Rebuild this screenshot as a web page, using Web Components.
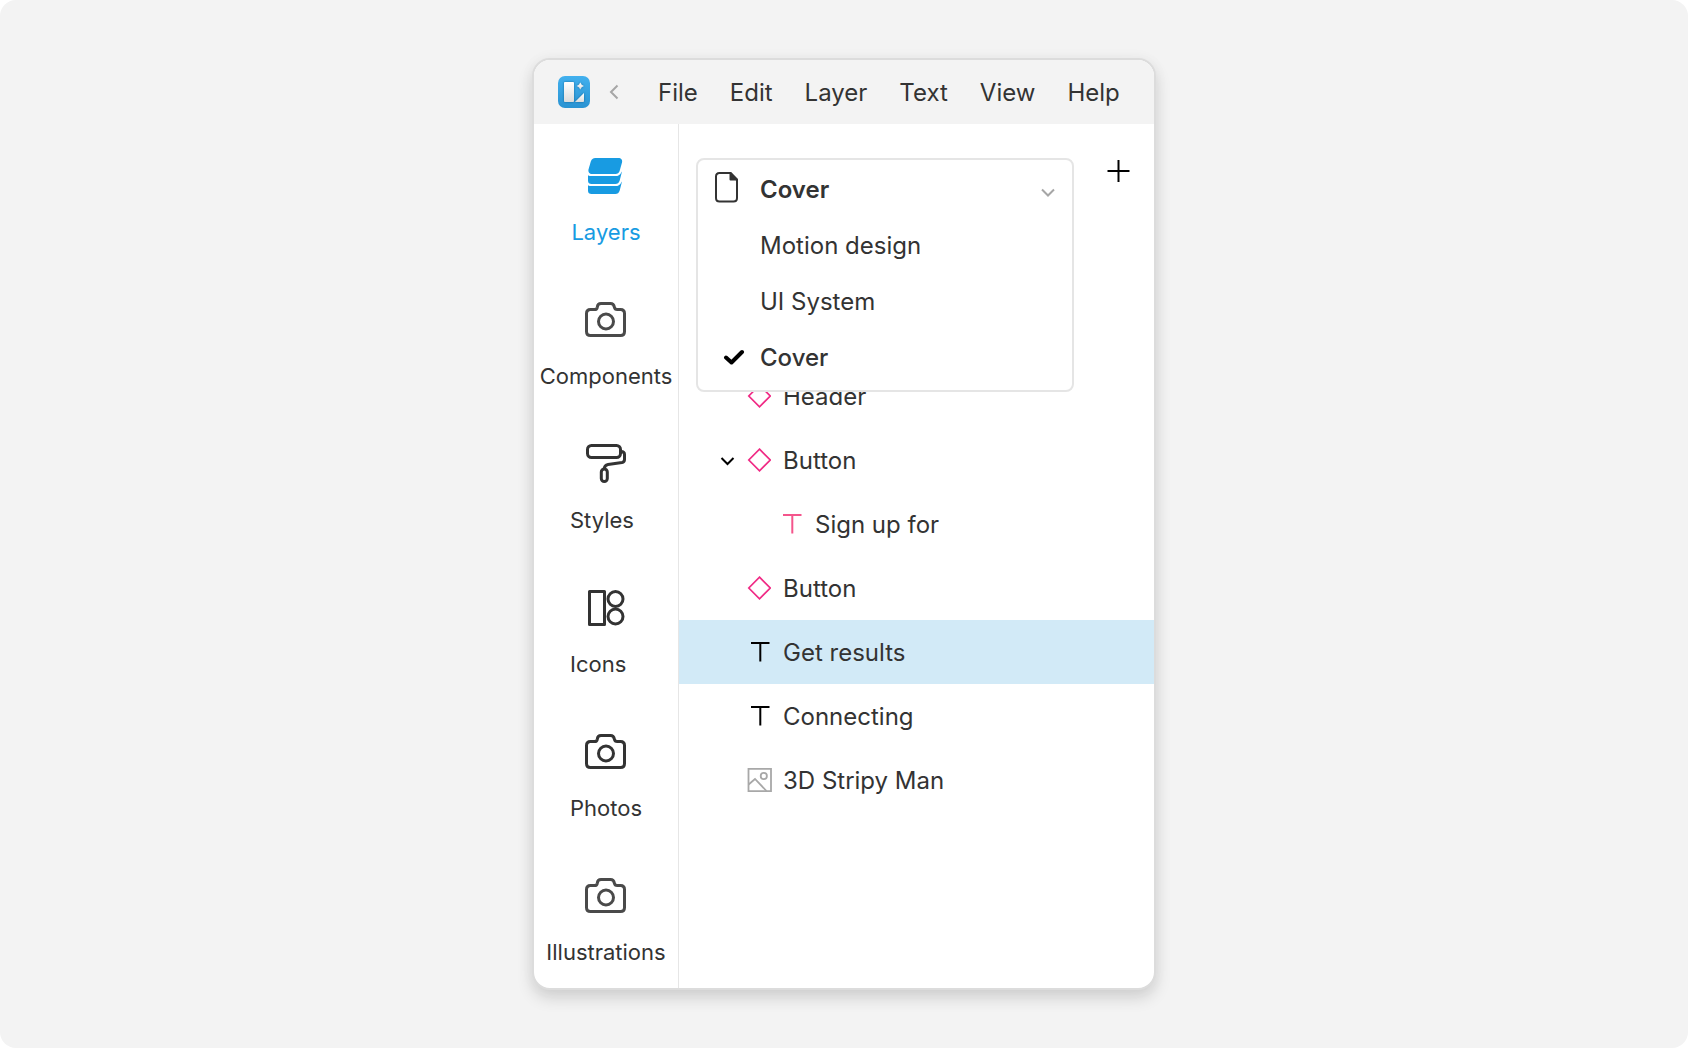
<!DOCTYPE html>
<html lang="en">
<head>
<meta charset="utf-8">
<title>Editor layers panel</title>
<style>
  html { background: #fff; }
  body { margin: 0; font-family: Inter, "Liberation Sans", sans-serif; font-weight: 400; color: #333; }
</style>
</head>
<body>
<editor-stage>
  <editor-window>
    <menu-bar slot="menu">
      <a href="#file">File</a><a href="#edit">Edit</a><a href="#layer">Layer</a><a href="#text">Text</a><a href="#view">View</a><a href="#help">Help</a>
    </menu-bar>
    <side-nav slot="side">
      <side-item icon="layers" active>Layers</side-item>
      <side-item icon="camera" soft>Components</side-item>
      <side-item icon="roller">Styles</side-item>
      <side-item icon="shapes">Icons</side-item>
      <side-item icon="camera">Photos</side-item>
      <side-item icon="camera" soft>Illustrations</side-item>
    </side-nav>
    <page-toolbar>
      <page-picker current="Cover">
        <page-option>Motion design</page-option>
        <page-option>UI System</page-option>
        <page-option checked>Cover</page-option>
      </page-picker>
    </page-toolbar>
    <layer-tree>
      <layer-row icon="diamond">Header</layer-row>
      <layer-row icon="diamond" expanded>Button</layer-row>
      <layer-row icon="text" tone="pink" nested>Sign up for</layer-row>
      <layer-row icon="diamond">Button</layer-row>
      <layer-row icon="text" selected>Get results</layer-row>
      <layer-row icon="text">Connecting</layer-row>
      <layer-row icon="image">3D Stripy Man</layer-row>
    </layer-tree>
  </editor-window>
</editor-stage>

<script>
const RESET = `
  *, *::before, *::after { box-sizing: border-box; }
  button { font: inherit; color: inherit; background: none; border: 0; margin: 0; padding: 0; text-align: left; cursor: pointer; }
  svg { display: block; flex: none; }
`;

const ICONS = {
  layers: `<svg width="40" height="40" viewBox="0 0 40 40" fill="currentColor">
    <path d="M9.400 2H32.500C35 2 36.700 4 36 6.500L33.600 15C33 17 31.500 18 29.500 18H6C3.500 18 1.900 16 2.500 13.500L4.800 5.500C5.500 3.200 7 2 9.400 2Z"/>
    <path d="M2 19.200C3.200 19.900 4.500 20.100 6 20.100H29.500C32 20.100 34.300 18.800 35.400 16.200L36 15.500L33.700 24.500C33 26.900 31.500 28 29.300 28H5.500C3.400 28 2 26.800 2 24.700Z"/>
    <path d="M2 29.200C3.200 29.900 4.500 30.100 6 30.100H29.500C32 30.100 34.300 28.800 35.400 26.200L36 25.500L33.700 34.500C33 36.900 31.500 38 29.300 38H5.500C3.400 38 2 36.800 2 34.700Z"/></svg>`,
  camera: `<svg width="42" height="40" viewBox="0 0 42 40" fill="none" stroke="currentColor" stroke-width="3" stroke-linejoin="round">
    <path d="M5.500 9.500H9.500C11.500 9.500 12.100 8.700 12.300 7.200C12.500 5 13.800 3.500 16 3.500H25.500C27.700 3.500 29 5 29.400 7.200C29.700 8.700 30.400 9.500 32.200 9.500H35.500C38 9.500 39.500 11 39.500 13.500V31.500C39.500 34 38 35.500 35.500 35.500H5.500C3 35.500 1.500 34 1.500 31.500V13.500C1.500 11 3 9.500 5.500 9.500Z"/>
    <circle cx="21" cy="21.500" r="7.500"/></svg>`,
  roller: `<svg width="40" height="40" viewBox="0 0 40 40" fill="none" stroke="currentColor" stroke-width="3" stroke-linejoin="round">
    <rect x="1.500" y="1.500" width="33" height="12" rx="4"/>
    <path d="M35 7.500C37.200 7.500 38.500 8.500 38.500 10.500V15.500C38.500 17.400 37.800 18.200 36 18.500L22 20.500C19.500 20.900 18.300 22.500 18.300 25"/>
    <rect x="15.300" y="25" width="6" height="12.500" rx="3"/></svg>`,
  shapes: `<svg width="40" height="40" viewBox="0 0 40 40" fill="none" stroke="currentColor" stroke-width="3">
    <path d="M3.500 3.500H18.500V36.500H3.500Z" stroke-linejoin="round"/>
    <circle cx="29.500" cy="11" r="7.500"/><circle cx="29.500" cy="28.500" r="7.500"/></svg>`,
  diamond: `<svg width="24" height="24" viewBox="0 0 24 24" fill="none" stroke="#f02a85" stroke-width="1.700"><path d="M12.500 1.200L23.200 12L12.500 22.800L1.800 12Z"/></svg>`,
  text: `<svg width="24" height="24" viewBox="0 0 24 24" fill="none" stroke="currentColor" stroke-width="2"><path d="M4 3H22.500M13.300 3V21.500"/></svg>`,
  image: `<svg width="25" height="24" viewBox="0 0 25 24" fill="none" stroke="#a8a8a8" stroke-width="1.800"><path d="M1.500.9H24V23.100H1.500Z"/><path d="M1.600 16.500L8 11L19.500 23"/><circle cx="16.800" cy="8" r="3.100"/></svg>`
};

function define(name, render) {
  customElements.define(name, class extends HTMLElement {
    constructor() { super(); this.attachShadow({ mode: 'open' }); }
    connectedCallback() {
      const t = document.createElement('template');
      t.innerHTML = render(this);
      this.shadowRoot.replaceChildren(t.content.cloneNode(true));
    }
  });
}

define('editor-stage', () => `<style>${RESET}
  :host { display: grid; place-items: center; box-sizing: border-box; min-height: 100vh; padding: 24px; background: #f3f3f3; border-radius: 16px; }
</style><slot></slot>`);

define('editor-window', () => `<style>${RESET}
  :host { display: block; box-sizing: border-box; width: 100%; max-width: 624px; border: 2px solid #dcdcdc; border-radius: 18px; background: #fff;
    box-shadow: 0 8px 16px rgba(0,0,0,.14), 0 0 16px rgba(0,0,0,.03); overflow: hidden; }
  .body { display: grid; grid-template-columns: 145px minmax(0, 1fr); }
  aside { border-right: 1px solid #e6e6e6; }
</style>
<header><slot name="menu"></slot></header>
<div class="body"><aside><slot name="side"></slot></aside><main><slot></slot></main></div>`);

define('menu-bar', () => `<style>${RESET}
  :host { display: flex; align-items: center; height: 64px; padding: 0 24px; background: #f3f3f3; }
  .back { width: 10px; margin: 0 39px 0 19px; }
  nav { display: flex; gap: 32px; font-size: 24px; line-height: 29px; }
  ::slotted(a) { color: inherit; text-decoration: none; }
</style>
<svg width="32" height="32" viewBox="0 0 32 32" role="img" aria-label="App logo">
  <defs>
    <linearGradient id="bg" x1="0" y1="0" x2="0" y2="1"><stop offset="0" stop-color="#42b0ee"/><stop offset="1" stop-color="#2a93d2"/></linearGradient>
    <linearGradient id="fg" x1="0" y1="0" x2="0" y2="1"><stop offset="0" stop-color="#fff"/><stop offset="1" stop-color="#dcdcdc"/></linearGradient>
    <filter id="sh" x="-30%" y="-30%" width="160%" height="160%"><feDropShadow dx="0" dy="0" stdDeviation="1.200" flood-color="#0b4f80" flood-opacity=".7"/></filter>
  </defs>
  <rect width="32" height="32" rx="7" fill="url(#bg)"/>
  <g filter="url(#sh)" fill="url(#fg)">
    <rect x="6" y="6" width="10" height="20" rx="1"/>
    <path d="M17 26L26 17V25Q26 26 25 26Z"/>
    <path d="M22.300 6.500L23.600 8.700L25.800 10L23.600 11.300L22.300 13.500L21 11.300L18.800 10L21 8.700Z"/>
  </g>
</svg>
<button class="back" aria-label="Back"><svg width="10" height="16" viewBox="0 0 10 16" fill="none" stroke="#a6a6a6" stroke-width="2"><path d="M8.500 1.500L2 8L8.500 14.500"/></svg></button>
<nav><slot></slot></nav>`);

define('side-nav', () => `<style>${RESET}
  :host { display: flex; flex-direction: column; }
</style><slot></slot>`);

define('side-item', el => `<style>${RESET}
  :host { display: block; color: #333; }
  :host([active]) { color: #189be2; }
  button { display: flex; flex-direction: column; align-items: center; gap: 22px; width: 100%; height: 144px; padding-top: 32px; }
  :host([soft]) svg { color: #4a4a4a; }
  span { min-width: 72px; font-size: 22px; line-height: 28px; white-space: nowrap; }
  :host([active]) span { text-align: center; }
</style>
<button>${ICONS[el.getAttribute('icon')]}<span><slot></slot></span></button>`);

define('page-toolbar', () => `<style>${RESET}
  :host { display: flex; align-items: flex-start; justify-content: space-between; box-sizing: border-box; height: 240px; padding: 34px 24px 0 17px; }
  ::slotted(page-picker) { flex: 0 1 378px; }
</style>
<slot></slot>
<button aria-label="Add page"><svg width="24" height="26" viewBox="0 0 24 26" stroke="#000" stroke-width="2"><path d="M1.500 13H23.500M12.500 2V24"/></svg></button>`);

define('page-picker', el => `<style>${RESET}
  :host { display: block; position: relative; z-index: 1; height: 60px; }
  .box { position: absolute; inset: 0 0 auto 0; padding: 1px 0 5px; background: #fff; border: 2px solid #e5e5e5; border-radius: 8px; font-size: 24px; line-height: 29px; }
  .head { display: flex; align-items: center; width: 100%; height: 56px; padding: 0 16px 0 17px; }
  .head span { flex: 1; margin-left: 20px; font-weight: 600; }
</style>
<div class="box">
  <button class="head" aria-haspopup="listbox" aria-expanded="true">
    <svg width="25" height="34" viewBox="0 0 25 34" fill="none" stroke="#333" stroke-width="2"><path d="M4.500 1H15.500L22 8V26C22 28 20.500 29.500 18.500 29.500H4.500C2.500 29.500 1 28 1 26V4.500C1 2.500 2.500 1 4.500 1Z"/><path d="M15.500 1V7.500H22Z" fill="#333" stroke-linejoin="round"/></svg>
    <span>${el.getAttribute('current')}</span>
    <svg width="16" height="16" viewBox="0 0 16 16" fill="none" stroke="#a6a6a6" stroke-width="2"><path d="M2 8.500L8 14.500L14 8.500"/></svg>
  </button>
  <div role="listbox" aria-label="Pages"><slot></slot></div>
</div>`);

define('page-option', el => `<style>${RESET}
  :host { display: block; }
  button { display: flex; align-items: center; width: 100%; height: 56px; padding: 0 16px 0 25px; }
  :host([checked]) button { font-weight: 500; }
  svg { width: 22px; margin-right: 15px; }
  :host(:not([checked])) svg { visibility: hidden; }
</style>
<button role="option" aria-selected="${el.hasAttribute('checked')}"><svg width="22" height="16" viewBox="0 0 22 16" fill="none" stroke="#000" stroke-width="4" stroke-linecap="round" stroke-linejoin="round"><path d="M3 8.500L8.500 13.500L19 3"/></svg><slot></slot></button>`);

define('layer-tree', () => `<style>${RESET}
  :host { display: flex; flex-direction: column; }
</style><slot></slot>`);

define('layer-row', el => `<style>${RESET}
  :host { display: block; }
  :host([selected]) { background: #d2eaf7; }
  button { display: flex; align-items: center; width: 100%; height: 64px; padding-left: 40px; font-size: 24px; line-height: 29px; white-space: nowrap; }
  :host([nested]) button { padding-left: 72px; }
  .twist { width: 16px; margin-right: 12px; }
  .icon { width: 24px; color: #000; margin-right: 12px; }
  :host([tone=pink]) .icon { color: #f4558c; }
</style>
<button><span class="twist">${el.hasAttribute('expanded') ? `<svg width="16" height="16" viewBox="0 0 16 16" fill="none" stroke="#000" stroke-width="2"><path d="M2.500 6L8.500 12L14.500 6"/></svg>` : ''}</span><span class="icon">${ICONS[el.getAttribute('icon')]}</span><slot></slot></button>`);
</script>
</body>
</html>
